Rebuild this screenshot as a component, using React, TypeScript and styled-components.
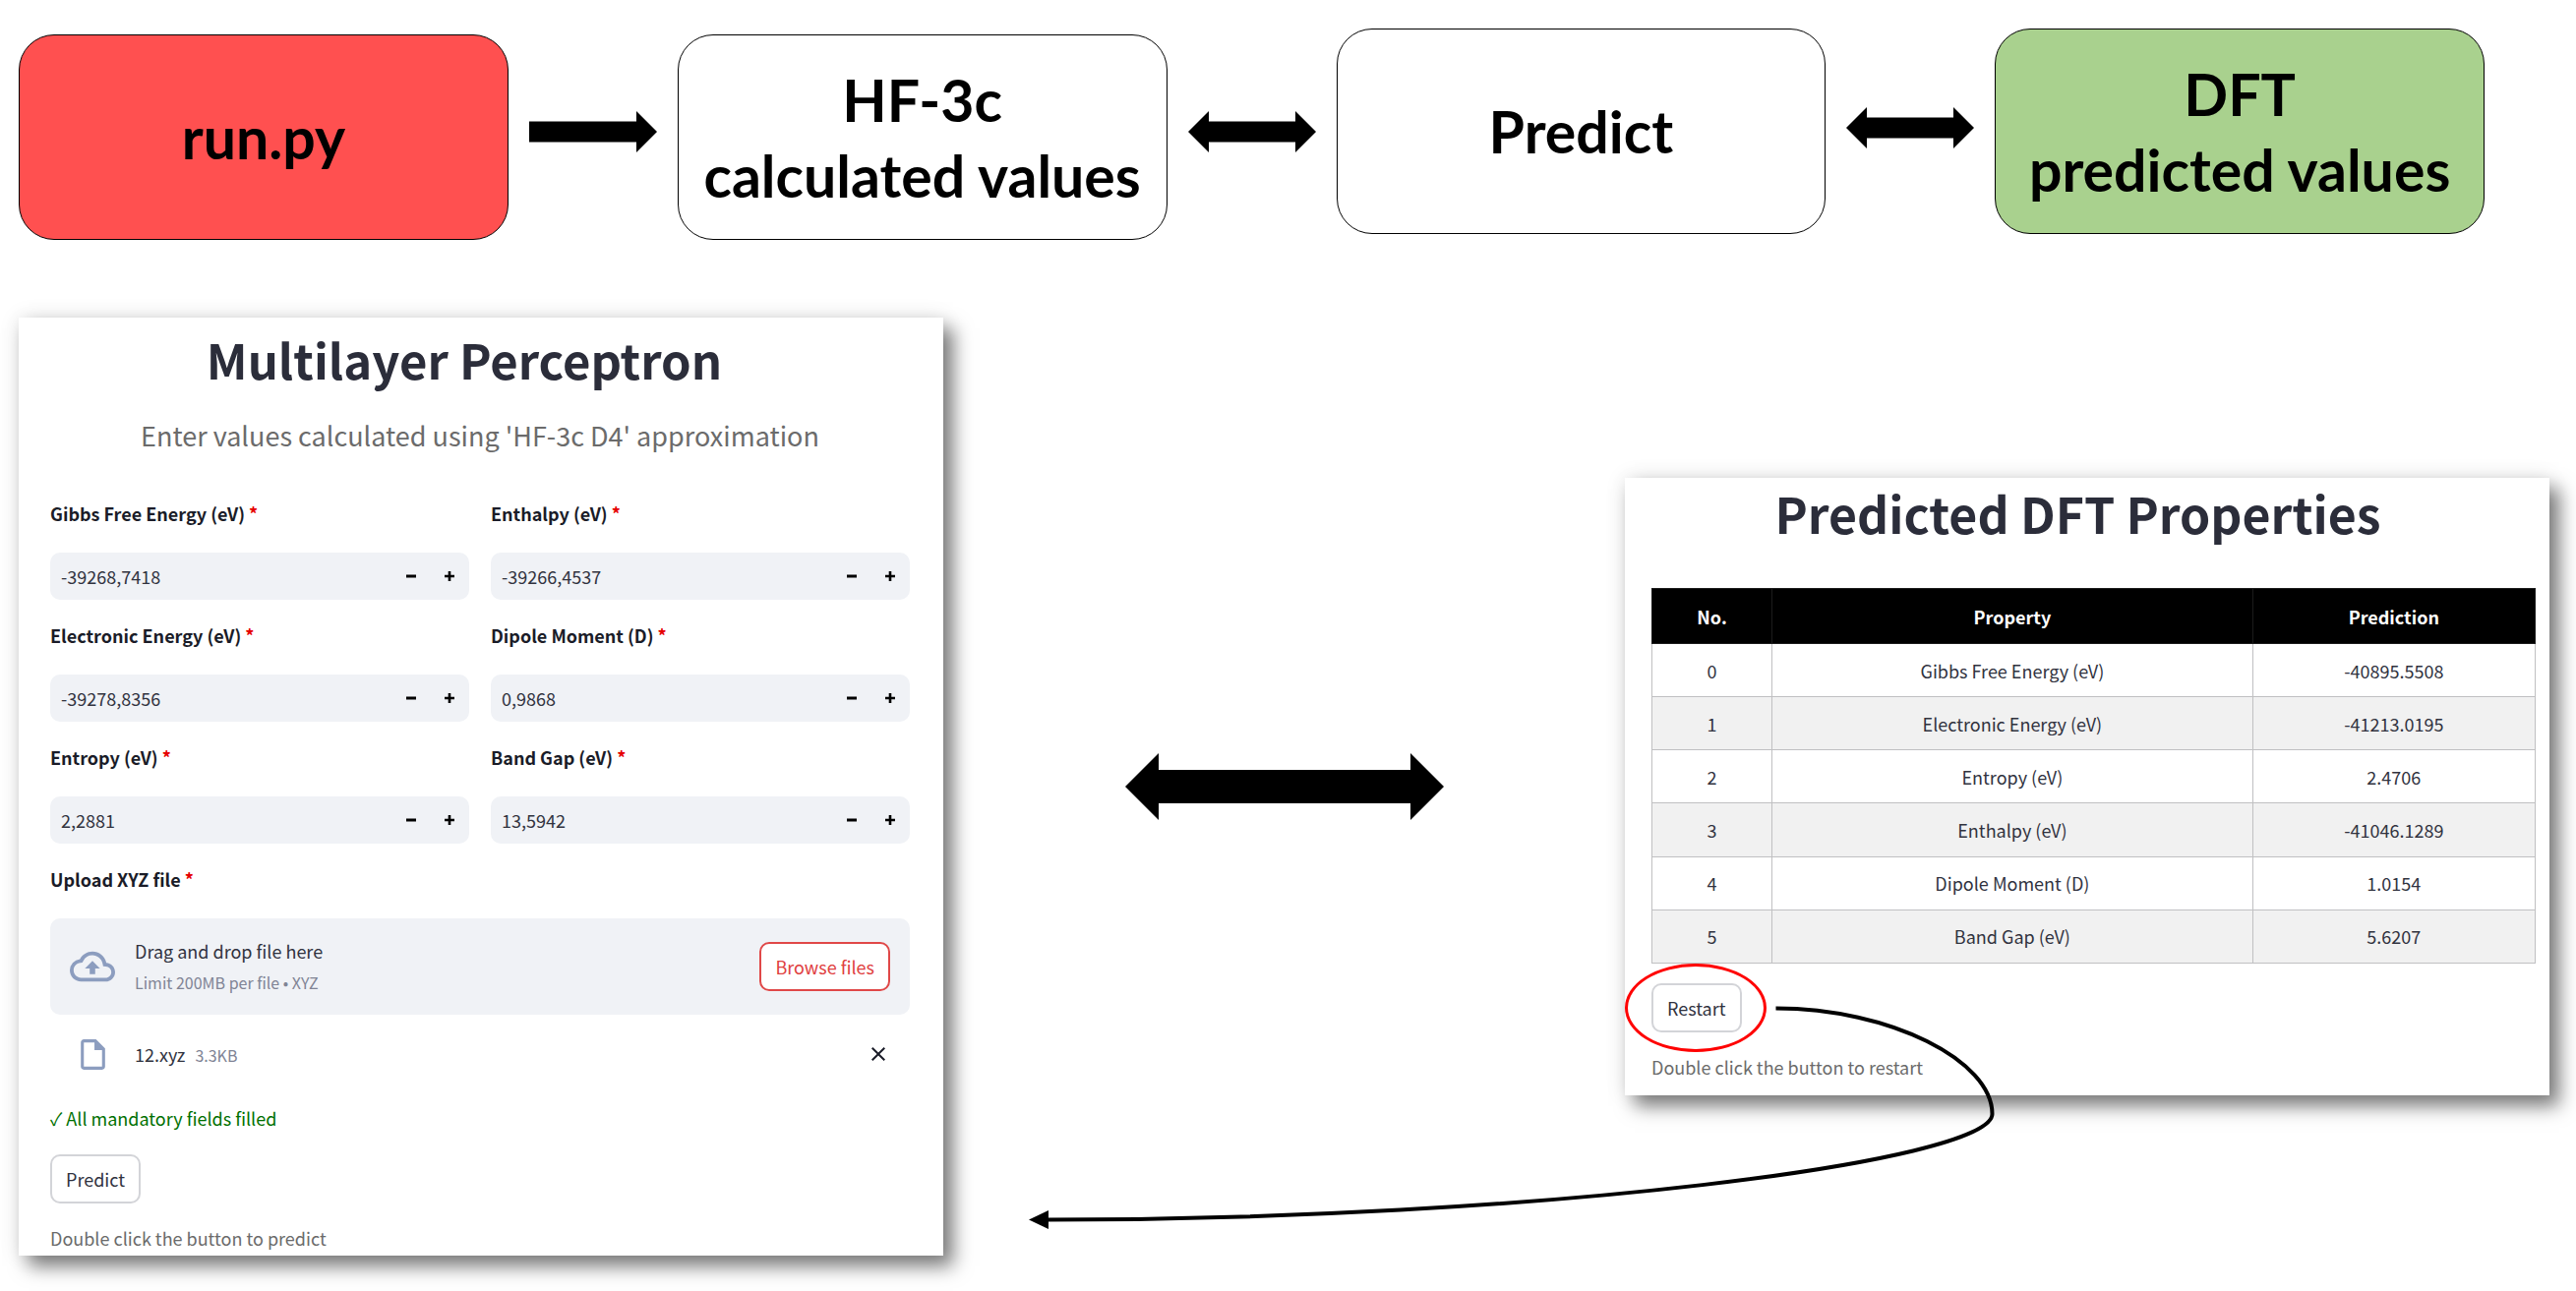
import React from 'react';
import styled, { createGlobalStyle } from 'styled-components';
import {
  MdClose,
  MdOutlineCloudUpload,
  MdOutlineInsertDriveFile,
} from 'react-icons/md';

const GlobalStyle = createGlobalStyle`
  *, *::before, *::after { box-sizing: border-box; }
  body {
    margin: 0;
    background: #ffffff;
    color: #31333f;
    font-family: "Noto Sans CJK JP", "Noto Sans", sans-serif;
    font-size: 18px;
    line-height: 24px;
  }
  button, input { font: inherit; color: inherit; }
`;

const Page = styled.main`
  display: flex;
  flex-direction: column;
  gap: 79px;
  padding-bottom: 36px;
  overflow-x: hidden;
`;

/* Pipeline along the top */

const Pipeline = styled.header`
  display: grid;
  grid-template-columns: 1fr 172px 1fr 172px 1fr 172px 1fr;
  align-items: start;
  padding: 29px 93px 0 19px;
`;

const Step = styled.div<{ $fill: string; $lowered?: boolean }>`
  display: flex;
  align-items: center;
  justify-content: center;
  height: 209px;
  margin-top: ${(p) => (p.$lowered ? 6 : 0)}px;
  border: 1px solid #000000;
  border-radius: 36px;
  background: ${(p) => p.$fill};
  color: #000000;
  font-family: Lato, "Open Sans", sans-serif;
  font-size: 59px;
  font-weight: 700;
  line-height: 77px;
  text-align: center;
  white-space: pre;
`;

const StepArrow = styled.div<{ $lowered?: boolean }>`
  display: flex;
  align-items: center;
  justify-content: center;
  height: 202px;
  margin-top: ${(p) => (p.$lowered ? 4 : 0)}px;
  svg { display: block; }
`;

/* Panels */

const Panels = styled.div`
  display: grid;
  grid-template-columns: 940fr 693fr 940fr;
  align-items: center;
  padding: 0 27px 0 19px;
`;

const Panel = styled.section<{ $inset: string }>`
  position: relative;
  padding: ${(p) => p.$inset};
  background: #ffffff;
  box-shadow: 10px 11px 18px rgba(0, 0, 0, 0.5), 0 0 20px rgba(0, 0, 0, 0.1);
`;

const Title = styled.h1<{ $size: number }>`
  margin: 0;
  padding-right: 32px;
  color: #2b2d3a;
  font-size: ${(p) => p.$size}px;
  font-weight: 700;
  line-height: 64px;
  text-align: center;
  white-space: nowrap;
`;

const Subtitle = styled.p`
  margin: 26px 0 47px;
  color: #6b6b6b;
  font-size: 27px;
  line-height: 40px;
  text-align: center;
`;

const Connector = styled.div`
  display: flex;
  justify-content: center;
  svg { display: block; }
`;

/* Form */

const Fields = styled.div`
  display: grid;
  grid-template-columns: 1fr 1fr;
  gap: 24px 22px;
`;

const Label = styled.label`
  display: block;
  color: #1a1c28;
  font-weight: 700;
`;

const Star = styled.span`
  color: #e60000;
`;

const NumberBox = styled.div`
  display: flex;
  align-items: center;
  height: 48px;
  margin-top: 28px;
  padding-right: 1px;
  border-radius: 10px;
  background: #f0f2f6;
`;

const NumberInput = styled.input`
  flex: 1;
  min-width: 0;
  height: 48px;
  padding: 0 11px;
  border: 0;
  outline: 0;
  background: transparent;
`;

const StepButton = styled.button`
  display: flex;
  align-items: center;
  justify-content: center;
  width: 39px;
  height: 48px;
  padding: 0;
  border: 0;
  background: transparent;
`;

const UploadLabel = styled(Label)`
  margin-top: 24px;
`;

const DropZone = styled.div`
  display: flex;
  align-items: center;
  height: 98px;
  margin-top: 28px;
  padding: 0 20px;
  border-radius: 10px;
  background: #f0f2f6;
`;

const IconSlot = styled.span`
  display: flex;
  justify-content: center;
  width: 46px;
  margin-right: 20px;
  color: #8c9dbf;
`;

const DropText = styled.div`
  flex: 1;
  line-height: 32px;
`;

const Muted = styled.span`
  color: #808495;
  font-size: 16px;
`;

const HiddenFile = styled.input`
  position: absolute;
  width: 1px;
  height: 1px;
  opacity: 0;
`;

const Button = styled.button<{ $danger?: boolean }>`
  height: 50px;
  padding: 0 14px;
  border: 2px solid ${(p) => (p.$danger ? '#e04848' : '#d3d4d8')};
  border-radius: 10px;
  background: #ffffff;
  color: ${(p) => (p.$danger ? '#e04040' : '#31333f')};
  white-space: nowrap;
`;

const FileRow = styled.div`
  display: flex;
  align-items: center;
  height: 40px;
  margin-top: 20px;
  padding: 0 20px;
`;

const FileName = styled.div`
  flex: 1;
  ${Muted} { margin-left: 10px; }
`;

const CloseButton = styled.button`
  display: flex;
  padding: 0;
  border: 0;
  background: transparent;
  color: #1a1c28;
`;

const Status = styled.p`
  margin: 33px 0 25px;
  color: #007000;
`;

const Caption = styled.p`
  margin: 23px 0 0;
  color: #6b6b6b;
`;

/* Results */

const ResultTable = styled.table`
  width: 100%;
  height: 382px;
  margin-top: 45px;
  border-collapse: collapse;
  table-layout: fixed;
  text-align: center;
  th, td {
    height: 54px;
    padding: 0;
    border: 1px solid #c0c0c2;
  }
  th {
    height: 56px;
    border-color: #1c1c1c;
    background: #000000;
    color: #ffffff;
    font-weight: 700;
  }
  tbody tr:nth-child(even) { background: #f1f1f1; }
`;

const Column = styled.col<{ $share: number }>`
  width: ${(p) => p.$share}%;
`;

const RestartArea = styled.div`
  position: relative;
  width: max-content;
  margin-top: 20px;
`;

const Ring = styled.span`
  position: absolute;
  inset: -20px -25px -20px -27px;
  border: 3px solid #ff0000;
  border-radius: 50%;
  pointer-events: none;
`;

const ReturnArrow = styled.svg`
  position: absolute;
  top: 20px;
  left: -637px;
  pointer-events: none;
`;

function RightArrow() {
  return (
    <svg width="130" height="42" viewBox="0 0 130 42" aria-hidden="true">
      <path d="M0 10.500H109V0L130 21 109 42V31.500H0Z" />
    </svg>
  );
}

function BothArrow() {
  return (
    <svg width="130" height="42" viewBox="0 0 130 42" aria-hidden="true">
      <path d="M0 21 21 0V10.500H109V0L130 21 109 42V31.500H21V42Z" />
    </svg>
  );
}

function NumberField({ id, label, value }: { id: string; label: string; value: string }) {
  return (
    <div>
      <Label htmlFor={id}>
        {label} <Star>*</Star>
      </Label>
      <NumberBox>
        <NumberInput id={id} inputMode="decimal" defaultValue={value} />
        <StepButton type="button" aria-label={`Decrease ${label}`}>
          <svg width="10" height="10" viewBox="0 0 10 10">
            <path d="M0 3.500H10V6.500H0Z" />
          </svg>
        </StepButton>
        <StepButton type="button" aria-label={`Increase ${label}`}>
          <svg width="10" height="10" viewBox="0 0 10 10">
            <path d="M0 3.700H3.700V0H6.300V3.700H10V6.300H6.300V10H3.700V6.300H0Z" />
          </svg>
        </StepButton>
      </NumberBox>
    </div>
  );
}

const fields = [
  { id: 'gibbs', label: 'Gibbs Free Energy (eV)', value: '-39268,7418' },
  { id: 'enthalpy', label: 'Enthalpy (eV)', value: '-39266,4537' },
  { id: 'electronic', label: 'Electronic Energy (eV)', value: '-39278,8356' },
  { id: 'dipole', label: 'Dipole Moment (D)', value: '0,9868' },
  { id: 'entropy', label: 'Entropy (eV)', value: '2,2881' },
  { id: 'gap', label: 'Band Gap (eV)', value: '13,5942' },
];

const predictions = [
  ['Gibbs Free Energy (eV)', '-40895.5508'],
  ['Electronic Energy (eV)', '-41213.0195'],
  ['Entropy (eV)', '2.4706'],
  ['Enthalpy (eV)', '-41046.1289'],
  ['Dipole Moment (D)', '1.0154'],
  ['Band Gap (eV)', '5.6207'],
];

export default function App() {
  return (
    <>
      <GlobalStyle />
      <Page>
        <Pipeline>
          <Step $fill="#ff5050" $lowered>run.py</Step>
          <StepArrow $lowered><RightArrow /></StepArrow>
          <Step $fill="#ffffff" $lowered>{'HF-3c\ncalculated values'}</Step>
          <StepArrow $lowered><BothArrow /></StepArrow>
          <Step $fill="#ffffff">Predict</Step>
          <StepArrow><BothArrow /></StepArrow>
          <Step $fill="#a9d18e">{'DFT\npredicted values'}</Step>
        </Pipeline>

        <Panels>
          <Panel $inset="10px 34px 6px 32px">
            <Title $size={49}>Multilayer Perceptron</Title>
            <Subtitle>Enter values calculated using 'HF-3c D4' approximation</Subtitle>
            <Fields>
              {fields.map((f) => (
                <NumberField key={f.id} {...f} />
              ))}
            </Fields>
            <UploadLabel htmlFor="xyz">
              Upload XYZ file <Star>*</Star>
            </UploadLabel>
            <DropZone>
              <IconSlot><MdOutlineCloudUpload size={46} /></IconSlot>
              <DropText>
                <div>Drag and drop file here</div>
                <Muted as="div">Limit 200MB per file • XYZ</Muted>
              </DropText>
              <HiddenFile id="xyz" type="file" accept=".xyz" tabIndex={-1} />
              <Button type="button" $danger>Browse files</Button>
            </DropZone>
            <FileRow>
              <IconSlot><MdOutlineInsertDriveFile size={37} /></IconSlot>
              <FileName>
                12.xyz<Muted>3.3KB</Muted>
              </FileName>
              <CloseButton type="button" aria-label="Remove 12.xyz">
                <MdClose size={24} />
              </CloseButton>
            </FileRow>
            <Status>✓ All mandatory fields filled</Status>
            <Button type="button">Predict</Button>
            <Caption>Double click the button to predict</Caption>
          </Panel>

          <Connector>
            <svg width="324" height="68" viewBox="0 0 324 68" aria-hidden="true">
              <path d="M0 34 34 0V17H290V0L324 34 290 68V51H34V68Z" />
            </svg>
          </Connector>

          <Panel $inset="3px 14px 17px 27px">
            <Title $size={50}>Predicted DFT Properties</Title>
            <ResultTable>
              <colgroup>
                <Column $share={13.6} />
                <Column $share={54.4} />
                <Column $share={32} />
              </colgroup>
              <thead>
                <tr>
                  <th scope="col">No.</th>
                  <th scope="col">Property</th>
                  <th scope="col">Prediction</th>
                </tr>
              </thead>
              <tbody>
                {predictions.map(([name, value], i) => (
                  <tr key={name}>
                    <td>{i}</td>
                    <td>{name}</td>
                    <td>{value}</td>
                  </tr>
                ))}
              </tbody>
            </ResultTable>
            <RestartArea>
              <Button type="button">Restart</Button>
              <Ring />
              <ReturnArrow width="990" height="240" viewBox="1042 1020 990 240" aria-hidden="true">
                <path
                  d="M1805.500 1025.500C1922 1025.500 2025.500 1079 2025.500 1133C2025.500 1182 1560 1240.500 1064 1240.500"
                  fill="none"
                  stroke="#000000"
                  strokeWidth="4"
                />
                <path d="M1046 1240.500 1066 1231V1250Z" />
              </ReturnArrow>
            </RestartArea>
            <Caption>Double click the button to restart</Caption>
          </Panel>
        </Panels>
      </Page>
    </>
  );
}
